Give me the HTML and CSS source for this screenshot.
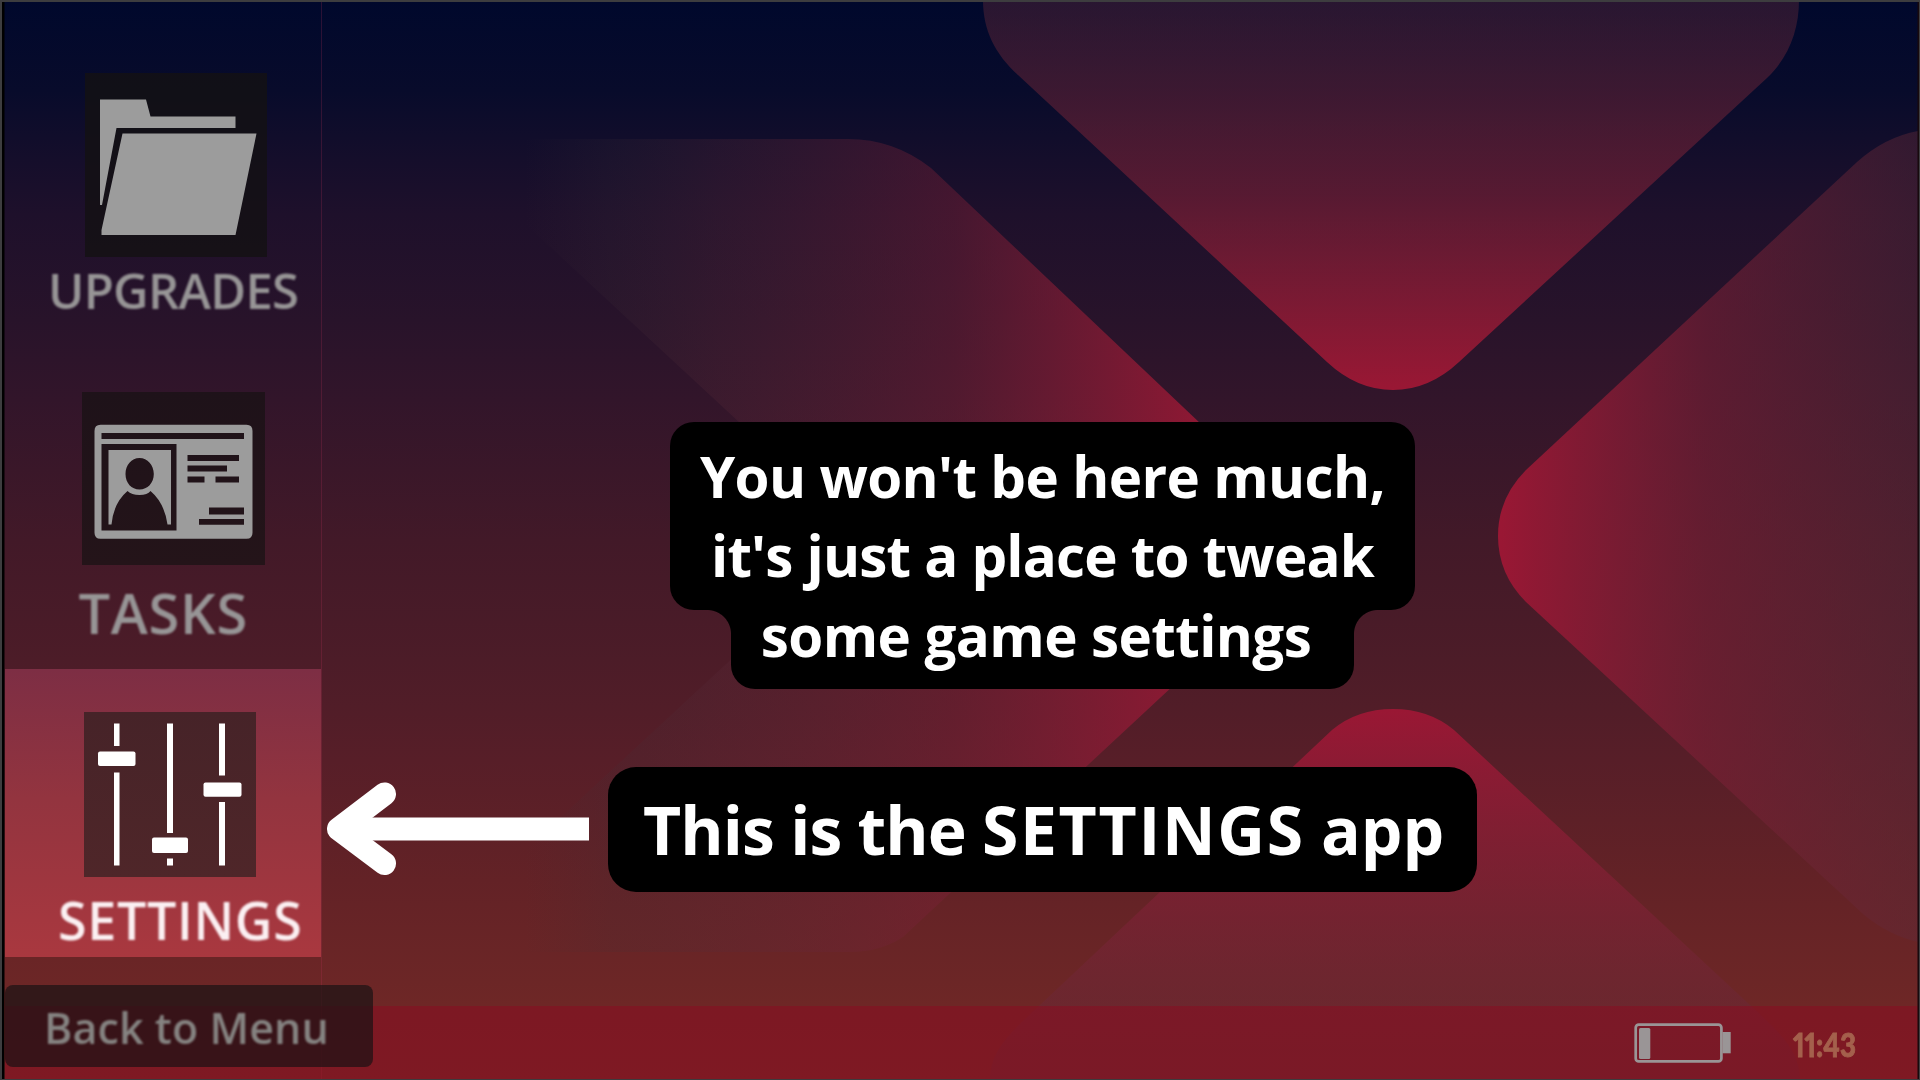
FILE: index.html
```html
<!DOCTYPE html>
<html lang="en">
<head>
<meta charset="utf-8">
<title>Settings app</title>
<link rel="stylesheet" href="styles.css">
</head>
<body>
<main class="desktop">
  <svg class="wallpaper" viewBox="0 0 1920 1080" aria-hidden="true">
    <defs>
      <linearGradient id="down" gradientUnits="userSpaceOnUse" x1="0" y1="0" x2="0" y2="390">
        <stop offset="0" stop-color="#602a38" stop-opacity=".42"/>
        <stop offset=".5" stop-color="#7c2036" stop-opacity=".62"/>
        <stop offset="1" stop-color="#9a1734"/>
      </linearGradient>
      <linearGradient id="up" gradientUnits="userSpaceOnUse" x1="0" y1="709" x2="0" y2="1050">
        <stop offset="0" stop-color="#9a1734"/>
        <stop offset=".5" stop-color="#842036" stop-opacity=".66"/>
        <stop offset="1" stop-color="#602a38" stop-opacity=".42"/>
      </linearGradient>
      <linearGradient id="right" gradientUnits="userSpaceOnUse" x1="1498" y1="0" x2="1918" y2="0">
        <stop offset="0" stop-color="#9a1734"/>
        <stop offset=".5" stop-color="#7c2036" stop-opacity=".58"/>
        <stop offset="1" stop-color="#602a38" stop-opacity=".42"/>
      </linearGradient>
      <linearGradient id="left" gradientUnits="userSpaceOnUse" x1="525" y1="0" x2="1240" y2="0">
        <stop offset="0" stop-color="#403038" stop-opacity="0"/>
        <stop offset=".12" stop-color="#403038" stop-opacity=".16"/>
        <stop offset=".27" stop-color="#582a38" stop-opacity=".26"/>
        <stop offset=".6" stop-color="#7c2036" stop-opacity=".42"/>
        <stop offset="1" stop-color="#9a1734"/>
      </linearGradient>
    </defs>
    <path fill="url(#down)" d="M983 0C983 30 995 54 1018 75L1327 362Q1357 390 1393 390T1459 362L1767 78C1789 57 1799 30 1799 0Z"/>
    <path fill="url(#right)" d="M1918 131Q1885 137 1857 162L1526 470Q1498 498 1498 536T1526 602L1863 914Q1888 935 1918 942Z"/>
    <path fill="url(#up)" d="M990 1080C990 1050 1012 1031 1040 1005L1332 730Q1357 709 1393 709T1454 730L1750 1005C1778 1031 1800 1050 1800 1080Z"/>
    <path fill="url(#left)" d="M520 139H848Q894 139 931 168L1260 480Q1288 543 1260 605L903 937Q880 952 850 952H520V855L739 652Q850 540 739 422L520 219Z"/>
  </svg>

  <nav class="sidebar">
    <a class="app app-upgrades">
      <svg class="icon" width="182" height="184" viewBox="84.5 73 182 184">
        <path d="M99.500 99.500H145.500L150 116.500H235V128H116L101.500 205H99.500ZM122 133.500H256L235 235H101V230Z"/>
      </svg>
      <span class="label">UPGRADES</span>
    </a>
    <a class="app app-tasks">
      <svg class="icon" width="183" height="173" viewBox="81.5 392 183 173">
        <path fill-rule="evenodd" d="M100 424.700H246Q252 424.700 252 431V532.700Q252 538.700 246 538.700H100Q94 538.700 94 532.700V431Q94 424.700 100 424.700ZM101 433V439H243.500V433ZM101 444V530.500H176V444ZM187 455V461H238.500V455ZM187 465.500V471.500H226.500V465.500ZM187 476.500V482.500H204V476.500ZM215 476.500V482.500H238.500V476.500ZM208.500 507.500V514.500H243.500V507.500ZM198.500 519V524.700H243.500V519Z"/>
        <path fill-rule="evenodd" d="M108 450H170.500V524.500H167Q164 503 150 491Q147 495 139 495T127 491Q113 503 111 524.500H108ZM139 458C131 458 125 465 125 474S131 489.500 139 489.500S153.300 483 153.300 474S147 458 139 458Z"/>
      </svg>
      <span class="label">TASKS</span>
    </a>
    <a class="app app-settings">
      <svg class="icon" width="172" height="165" viewBox="84 711.5 172 165">
        <path d="M114 723h5.500v22.500h-5.500zM114 772h5.500v93h-5.500zM167 723h6v109.500h-6zM167 858h6v7h-6zM219 723h6v52h-6zM219 801.500h6v63.500h-6z"/>
        <rect x="98" y="751" width="37.500" height="14.500" rx="2"/>
        <rect x="152" y="837" width="36" height="15.500" rx="2"/>
        <rect x="203.500" y="782" width="38" height="14.300" rx="2"/>
      </svg>
      <span class="label">SETTINGS</span>
    </a>
  </nav>

  <footer class="taskbar">
    <svg class="battery" width="98" height="42" viewBox="0 0 98 42">
      <rect x="2.700" y="2.700" width="85.700" height="36.700" rx="3" fill="none" stroke="#9a9596" stroke-width="2.700"/>
      <rect x="6" y="6" width="11.300" height="31" rx="1.500"/>
      <path d="M89.500 10h8.200v21.300h-8.200z"/>
    </svg>
    <time class="clock">11:43</time>
  </footer>
  <button class="back"><span>Back to Menu</span></button>
</main>

<svg class="arrow" width="264" height="96" viewBox="326 781 264 96" aria-hidden="true">
  <path class="head" d="M384.500 794L338.500 829L384.500 863.500"/>
  <path d="M345 829H589"/>
</svg>

<section class="note note-hint">
  <p class="note-top"><span class="line-one">You won't be here much,</span><span class="line-two">it's just a place to tweak</span></p>
  <p class="note-tab"><span class="line-three">some game settings</span></p>
</section>
<section class="note note-title"><span class="lead">This is the</span><strong>SETTINGS</strong><span>app</span></section>
</body>
</html>
```
FILE: styles.css
```css
* { box-sizing: border-box; }
body {
  margin: 0;
  width: 1920px;
  height: 1080px;
  overflow: hidden;
  background: #000;
  font-family: "Open Sans", "Noto Sans", sans-serif;
}
.desktop {
  position: relative;
  display: grid;
  grid-template-rows: 1fr 74px;
  width: 1920px;
  height: 1080px;
  padding: 2px 2px 0 5px;
  background: linear-gradient(#00082c 0, #080b2b 90px, #150e2b 160px, #1e102b 215px, #28132a 320px, #32152a 400px, #421928 540px, #4c1c28 660px, #571e28 760px, #632226 880px, #6e2726 1006px, #722826 1080px);
}
.desktop::after {
  content: "";
  position: absolute;
  inset: 0;
  border: solid #3d3d3f;
  border-width: 2px 1px 1px 2px;
  box-shadow: inset 2.500px 0 #000, inset -1.500px 0 #17090d;
  pointer-events: none;
}
.wallpaper { position: absolute; inset: 0; width: 100%; height: 100%; }

.sidebar {
  position: relative;
  display: flex;
  flex-direction: column;
  width: 317px;
  height: 1077px;
  border-right: 1px solid rgba(190, 50, 90, .22);
}
.app { display: flex; flex-direction: column; align-items: flex-start; color: #979596; }
.app-upgrades { height: 330px; padding: 71px 0 0 79.500px; }
.app-tasks { height: 336.500px; padding: 60px 0 0 76.500px; }
.app-settings {
  height: 288.500px;
  padding: 43px 0 0 79px;
  color: #fbf0f2;
  background: linear-gradient(#7d2e44, #93343f 45%, #a9383f);
}
.icon { display: block; flex: none; background: rgba(20, 17, 20, .82); fill: #9c9c9c; }
.app-tasks .icon { background: linear-gradient(#1e1219, #241419); }
.app-settings .icon { background: linear-gradient(#462328, #4f2629); fill: #fff; }
.label { height: 60px; line-height: 60px; font-weight: 600; white-space: nowrap; filter: blur(.8px); }
.app-upgrades .label { margin: 3px 0 0 -36.500px; font-size: 49px; letter-spacing: -.700px; }
.app-tasks .label { margin: 17px 0 0 -3px; font-size: 56px; letter-spacing: .700px; }
.app-settings .label { margin: 13px 0 0 -26px; font-size: 52px; letter-spacing: .650px; }

.taskbar {
  position: absolute;
  left: 5px;
  right: 2px;
  bottom: 0;
  display: flex;
  justify-content: flex-end;
  align-items: flex-start;
  height: 74px;
  padding: 16px 62px 0 0;
  background: rgba(140, 10, 32, .5);
}
.battery { fill: #9a9596; margin-right: 62px; }
.clock {
  display: flex;
  justify-content: flex-end;
  width: 63px;
  font: 900 33px/44px Lato, sans-serif;
  font-feature-settings: "pnum";
  color: #a4604c;
  -webkit-text-stroke: .900px #a4604c;
  transform: scaleX(.84);
  transform-origin: right;
  filter: blur(.5px);
}

.back {
  position: absolute;
  left: 5px;
  top: 985px;
  display: flex;
  align-items: center;
  width: 368px;
  height: 82px;
  padding: 3px 0 0 39px;
  border: 0;
  border-radius: 8px;
  background: rgba(20, 17, 18, .66);
  color: #858381;
  font: 600 43px/60px "Open Sans", "Noto Sans", sans-serif;
  white-space: nowrap;
}
.back span { letter-spacing: .080px; filter: blur(.8px); }

.arrow {
  position: absolute;
  left: 326px;
  top: 781px;
  fill: none;
  stroke: #fff;
  stroke-width: 23px;
  stroke-linejoin: round;
}
.head { stroke-linecap: round; }

.note { position: absolute; color: #fff; font-weight: 700; white-space: nowrap; }
.note-hint { left: 670px; top: 422px; width: 745px; font-size: 56.500px; line-height: 79px; }
.note-top { display: flex; flex-direction: column; align-items: center; height: 187.500px; margin: 0; padding-top: 15px; border-radius: 24px; background: #000; }
.note-tab { position: relative; display: flex; justify-content: center; width: 623px; height: 79px; margin: 0 0 0 61px; padding-right: 13px; border-radius: 0 0 24px 24px; background: #000; }
.note-tab span { margin-top: -14px; }
.note-tab::before, .note-tab::after { content: ""; position: absolute; top: 0; width: 24px; height: 24px; }
.note-tab::before { right: 100%; background: radial-gradient(circle at 0 100%, transparent 23.500px, #000 24.500px); }
.note-tab::after { left: 100%; background: radial-gradient(circle at 100% 100%, transparent 23.500px, #000 24.500px); }
.line-one { letter-spacing: -.640px; }
.line-two { letter-spacing: -.800px; }
.line-three { letter-spacing: -.600px; }
.note-title {
  left: 608px;
  top: 766.500px;
  display: flex;
  gap: 16px;
  width: 869px;
  height: 125px;
  padding-left: 35px;
  border-radius: 28px;
  background: #000;
  font-size: 66px;
  line-height: 124px;
}
.note-title strong { font-weight: 700; letter-spacing: 1.700px; }
.lead { letter-spacing: -.900px; }
```
